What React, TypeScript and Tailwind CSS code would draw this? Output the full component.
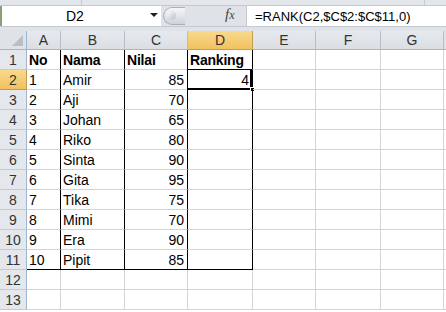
import React from "react";

const cols = [
  { k: "A", w: 34 },
  { k: "B", w: 64 },
  { k: "C", w: 63 },
  { k: "D", w: 65 },
  { k: "E", w: 63 },
  { k: "F", w: 65 },
  { k: "G", w: 63 },
];

const data: [string, string, string, string][] = [
  ["No", "Nama", "Nilai", "Ranking"],
  ["1", "Amir", "85", "4"],
  ["2", "Aji", "70", ""],
  ["3", "Johan", "65", ""],
  ["4", "Riko", "80", ""],
  ["5", "Sinta", "90", ""],
  ["6", "Gita", "95", ""],
  ["7", "Tika", "75", ""],
  ["8", "Mimi", "70", ""],
  ["9", "Era", "90", ""],
  ["10", "Pipit", "85", ""],
  ["", "", "", ""],
  ["", "", "", ""],
];

const font = { fontFamily: '"Liberation Sans", Arial, sans-serif' };

function Cell({ r, c, w }: { r: number; c: number; w: number }) {
  const inTable = r < 11 && c < 4;
  const rightBlack = inTable;
  const bottomBlack = r === 10 && c < 4;
  const val = c < 4 ? data[r][c] : "";
  const bold = r === 0 && c < 4;
  const right = r > 0 && (c === 2 || c === 3);
  const selected = r === 1 && c === 3;
  return (
    <div
      className={
        "relative h-[20px] shrink-0 border-r border-b box-border flex items-center text-[14px] text-black leading-none " +
        (rightBlack ? "border-r-black " : "border-r-[#d4d4d4] ") +
        (bottomBlack ? "border-b-black " : "border-b-[#d4d4d4] ") +
        (right ? "justify-end pr-[3px] " : "pl-[2px] ") +
        (bold ? "font-bold tracking-[-0.2px] " : "")
      }
      style={{ width: w }}
    >
      {val}
      {selected && (
        <>
          <div className="absolute left-[-1px] top-[-1px] right-[0px] bottom-[-1px] border border-black border-b-2 border-r-2 pointer-events-none" />
          <div className="absolute right-[-3px] bottom-[-3px] w-[5px] h-[5px] bg-black border border-white" />
        </>
      )}
    </div>
  );
}

export default function App() {
  return (
    <div className="w-[446px] h-[312px] overflow-hidden bg-white" style={font}>
      {/* top band */}
      <div className="h-[6px] bg-[#e3e6ea] border-b border-[#c5cad2] flex">
        <div className="w-[82px] border-r border-[#c5cad2]" />
        <div className="flex-1" />
        <div className="w-[22px] border-l border-[#c5cad2]" />
      </div>
      {/* formula bar */}
      <div className="h-[20px] flex items-stretch bg-[#dfe3e8]">
        <div className="w-[2px] bg-[#8aa07a]" />
        <div className="w-[159px] bg-white flex items-center relative">
          <span className="absolute left-[64px] text-[14px] text-black leading-none">D2</span>
          <svg className="absolute left-[148px] top-[7px]" width="8" height="5" viewBox="0 0 8 5">
            <polygon points="0,0 8,0 4,4" fill="#222" />
          </svg>
        </div>
        <div className="w-[85px] relative">
          <div className="absolute left-[2px] top-[1px] w-[22px] h-[18px] rounded-l-full bg-gradient-to-b from-[#f4f5f7] to-[#cfd4db] border border-[#a9b0ba] border-r-0" />
          <div className="absolute left-[6px] top-[5px] w-[9px] h-[9px] rounded-full bg-gradient-to-br from-white to-[#b8bec6]" />
          <span className="absolute left-[64px] top-[1px] text-[15px] italic text-[#444] leading-none" style={{ fontFamily: '"Liberation Serif", serif' }}>
            f<span className="text-[12px]">x</span>
          </span>
        </div>
        <div className="flex-1 bg-white flex items-center pl-[8px] text-[13px] text-black leading-none border-l border-[#c5cad2]">
          =RANK(C2,$C$2:$C$11,0)
        </div>
      </div>
      {/* gap band */}
      <div className="h-[5px] bg-[#dfe3e8] border-t border-[#c5cad2]" />
      {/* column headers */}
      <div className="flex h-[19px]">
        <div className="w-[27px] shrink-0 bg-[#dfe3e8] border-r border-b border-[#9eb6ce] relative box-border">
          <svg className="absolute right-[3px] bottom-[3px]" width="11" height="11" viewBox="0 0 11 11">
            <polygon points="11,0 11,11 0,11" fill="#b9bec6" />
          </svg>
        </div>
        {cols.map((c) => (
          <div
            key={c.k}
            className={
              "shrink-0 box-border border-r border-b flex items-center justify-center text-[14px] leading-none " +
              (c.k === "D"
                ? "bg-gradient-to-b from-[#f9d98d] to-[#f1c15f] border-r-[#c29b55] border-b-[#c29b55] text-[#333]"
                : "bg-gradient-to-b from-[#e6e9ee] to-[#dbdfe4] border-r-[#b9bec6] border-b-[#9eb6ce] text-[#333]")
            }
            style={{ width: c.w }}
          >
            {c.k}
          </div>
        ))}
        <div className="flex-1 bg-[#dfe3e8] border-b border-[#9eb6ce]" />
      </div>
      {/* rows */}
      {data.map((_, r) => (
        <div key={r} className="flex h-[20px]">
          <div
            className={
              "w-[27px] shrink-0 box-border border-r border-b flex items-center justify-center text-[14px] leading-none " +
              (r === 1
                ? "bg-gradient-to-b from-[#f9d98d] to-[#f1c15f] border-[#c29b55] text-[#333]"
                : "bg-[#e4e7eb] border-r-[#9eb6ce] border-b-[#c5cad2] text-[#333]")
            }
          >
            {r + 1}
          </div>
          {cols.map((c, ci) => (
            <Cell key={c.k} r={r} c={ci} w={c.w} />
          ))}
          <div className="flex-1 border-b border-[#d4d4d4]" />
        </div>
      ))}
    </div>
  );
}
